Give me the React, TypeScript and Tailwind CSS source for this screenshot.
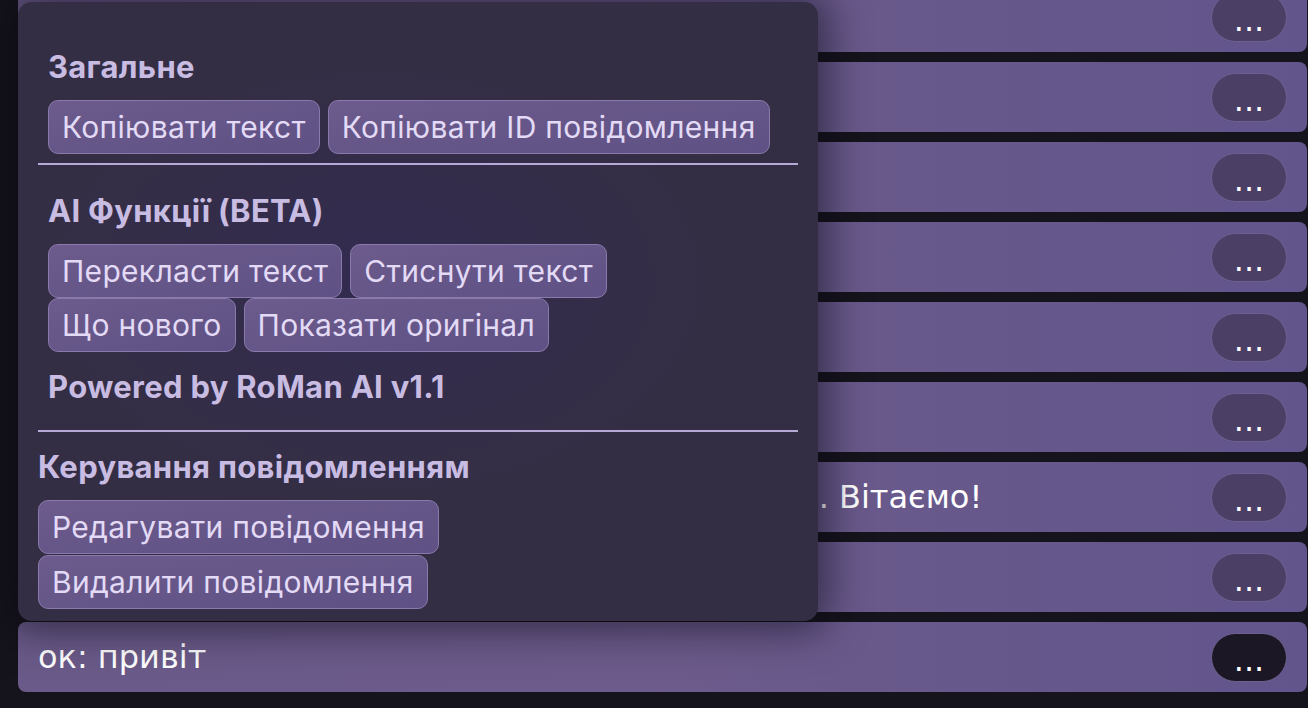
import React from "react";

const rows: { text: string; dark?: boolean }[] = [
  { text: "ок: привіт" },
  { text: "ок: як справи?" },
  { text: "ок: все добре" },
  { text: "ок: дякую" },
  { text: "ок: привіт" },
  { text: "ок: тест" },
  { text: "ок: Ласкаво просимо, Ви отримали подарунок. Вітаємо!" },
  { text: "ок: привіт" },
  { text: "ок: привіт", dark: true },
];

function Btn({ children }: { children: React.ReactNode }) {
  return (
    <div className="h-[54px] flex items-center px-[13px] rounded-[10px] border border-[#8a7aab] bg-gradient-to-br from-[#6c5b8c] to-[#5f5185] text-[#e3daf6] text-[30px] tracking-[0.3px] whitespace-nowrap">
      {children}
    </div>
  );
}

function Heading({ children, className = "" }: { children: React.ReactNode; className?: string }) {
  return (
    <div className={"text-[31px] leading-8 font-bold tracking-[0.3px] text-[#c8bce2] " + className}>
      {children}
    </div>
  );
}

export default function App() {
  return (
    <div
      className="relative w-[1308px] h-[708px] overflow-hidden bg-[#15131b]"
      style={{ fontFamily: "'DejaVu Sans', sans-serif" }}
    >
      <div className="flex flex-col gap-[10px] pl-[18px] pr-[1px] mt-[-18px]">
        {rows.map((r, i) => (
          <div
            key={i}
            className="h-[70px] shrink-0 rounded-[8px] flex items-center justify-between pl-5 pr-5 bg-gradient-to-r from-[#6a5a89] via-[#6c5b8b] to-[#62558c]"
          >
            <div className="text-[32px] text-white whitespace-nowrap overflow-hidden">{r.text}</div>
            <div
              className={
                "w-[76px] h-[49px] shrink-0 rounded-full border border-[#6e6190] flex items-end justify-center pb-[1px] text-white text-[32px] leading-[40px] " +
                (r.dark ? "bg-[#1b1724]" : "bg-[#4b3f66]")
              }
            >
              ...
            </div>
          </div>
        ))}
      </div>

      <div
        className="absolute left-[18px] top-[2px] w-[800px] h-[619px] rounded-[14px] bg-[#342e45] px-5 shadow-[0_0_40px_10px_rgba(10,8,20,0.55)]"
        style={{
          fontFamily: "Inter, 'Noto Sans', sans-serif",
          backgroundImage:
            "radial-gradient(ellipse 60% 50% at 45% 45%, rgba(50,43,82,0.85), rgba(52,46,69,0) 70%)",
        }}
      >
        <div className="pl-[10px] pt-[49px]">
          <Heading>Загальне</Heading>
          <div className="flex flex-wrap gap-x-2 mt-[17px]">
            <Btn>Копіювати текст</Btn>
            <Btn>Копіювати ID повідомлення</Btn>
          </div>
        </div>
        <div className="h-[2px] bg-[#b7a9d6] mt-[9px]" />
        <div className="pl-[10px] pt-[30px]">
          <Heading>AI Функції (BETA)</Heading>
          <div className="flex flex-wrap gap-x-2 mt-[17px]">
            <Btn>Перекласти текст</Btn>
            <Btn>Стиснути текст</Btn>
            <Btn>Що нового</Btn>
            <Btn>Показати оригінал</Btn>
          </div>
          <Heading className="mt-[19px]">Powered by RoMan AI v1.1</Heading>
        </div>
        <div className="h-[2px] bg-[#b7a9d6] mt-[27px]" />
        <div className="pt-[19px]">
          <Heading>Керування повідомленням</Heading>
          <div className="flex flex-col items-start gap-[1px] mt-[17px]">
            <Btn>Редагувати повідомення</Btn>
            <Btn>Видалити повідомлення</Btn>
          </div>
        </div>
      </div>
    </div>
  );
}
